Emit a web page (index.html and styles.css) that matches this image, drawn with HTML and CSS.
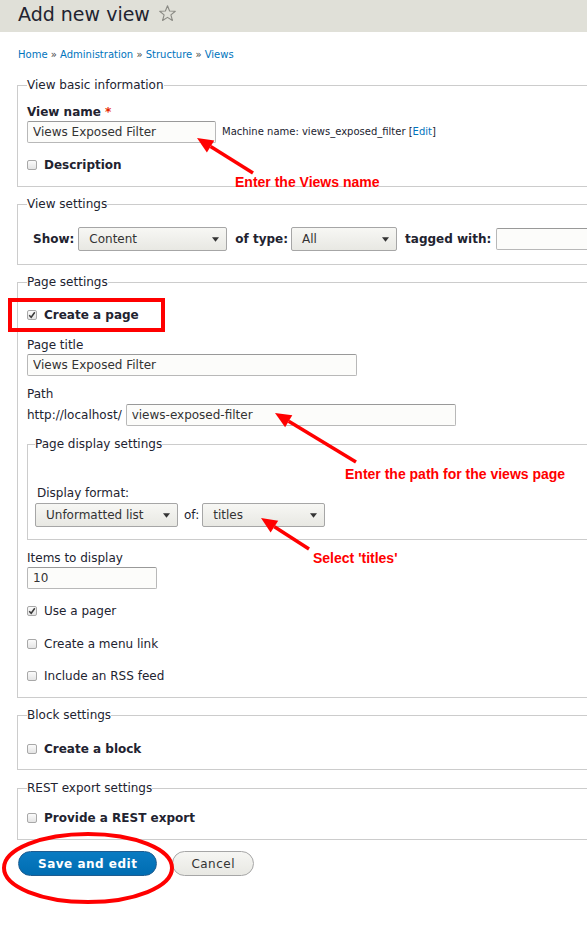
FILE: index.html
```html
<!DOCTYPE html>
<html>
<head>
<meta charset="utf-8">
<title>Add new view</title>
<link rel="stylesheet" href="styles.css">
</head>
<body>
<header class="page-header">
  <h1>Add new view</h1>
  <svg class="star" width="18" height="17" viewBox="0 0 18 17"><polygon points="8.5,0.8 10.6,6 16.3,6.3 11.9,9.9 13.4,15.5 8.5,12.4 3.6,15.5 5.1,9.9 0.7,6.3 6.4,6" fill="none" stroke="#8a8a84" stroke-width="1.1" stroke-linejoin="round"/></svg>
</header>
<main class="page">
  <nav class="breadcrumb"><a href="#">Home</a> » <a href="#">Administration</a> » <a href="#">Structure</a> » <a href="#">Views</a></nav>

  <fieldset class="fs fs-basic">
    <legend>View basic information</legend>
    <div class="lbl bold m11">View name <span class="req">*</span></div>
    <div class="row m1">
      <input class="text w-name" type="text" value="Views Exposed Filter">
      <span class="machine">Machine name: views_exposed_filter [<a href="#">Edit</a>]</span>
    </div>
    <div class="check bold m14"><span class="cb"></span>Description</div>
  </fieldset>

  <fieldset class="fs fs-view">
    <legend>View settings</legend>
    <div class="row show-row m15">
      <span class="bold">Show:</span>
      <span class="select sel-show">Content<svg width="7" height="5" viewBox="0 0 8 5"><path d="M0 0H8L4 5Z" fill="#333"/></svg></span>
      <span class="bold lbl-type">of type:</span>
      <span class="select sel-type">All<svg width="7" height="5" viewBox="0 0 8 5"><path d="M0 0H8L4 5Z" fill="#333"/></svg></span>
      <span class="bold lbl-tag">tagged with:</span>
      <input class="text w-tag" type="text" value="">
    </div>
  </fieldset>

  <fieldset class="fs fs-page">
    <legend>Page settings</legend>
    <div class="check bold m17"><span class="cb checked"><svg width="8" height="8" viewBox="0 0 8 8"><path d="M1.2 4.2L3.2 6.3L6.8 1.2" fill="none" stroke="#3a3a3a" stroke-width="1.5"/></svg></span>Create a page</div>
    <div class="lbl m14">Page title</div>
    <input class="text w-title m1 block" type="text" value="Views Exposed Filter">
    <div class="lbl m10">Path</div>
    <div class="row m2">
      <span class="prefix">http://localhost/</span>
      <input class="text w-title" type="text" value="views-exposed-filter">
    </div>
    <fieldset class="fs fs-inner">
      <legend>Page display settings</legend>
      <div class="lbl lbl-format m33">Display format:</div>
      <div class="row m2">
        <span class="select sel-format">Unformatted list<svg width="7" height="5" viewBox="0 0 8 5"><path d="M0 0H8L4 5Z" fill="#333"/></svg></span>
        <span class="of">of:</span>
        <span class="select sel-of">titles<svg width="7" height="5" viewBox="0 0 8 5"><path d="M0 0H8L4 5Z" fill="#333"/></svg></span>
      </div>
    </fieldset>
    <div class="lbl m10">Items to display</div>
    <input class="text w-items m1 block" type="text" value="10">
    <div class="check m14"><span class="cb checked"><svg width="8" height="8" viewBox="0 0 8 8"><path d="M1.2 4.2L3.2 6.3L6.8 1.2" fill="none" stroke="#3a3a3a" stroke-width="1.5"/></svg></span>Use a pager</div>
    <div class="check m17"><span class="cb"></span>Create a menu link</div>
    <div class="check m16"><span class="cb"></span>Include an RSS feed</div>
  </fieldset>

  <fieldset class="fs fs-block">
    <legend>Block settings</legend>
    <div class="check bold m18"><span class="cb"></span>Create a block</div>
  </fieldset>

  <fieldset class="fs fs-rest">
    <legend>REST export settings</legend>
    <div class="check bold m14"><span class="cb"></span>Provide a REST export</div>
  </fieldset>

  <div class="actions">
    <button class="btn primary" type="button">Save and edit</button>
    <button class="btn" type="button">Cancel</button>
  </div>
</main>

<svg class="annotations" width="587" height="937" viewBox="0 0 587 937">
  <rect x="10" y="300" width="153" height="30" fill="none" stroke="#f00" stroke-width="4"/>
  <ellipse cx="88" cy="868" rx="84" ry="34" fill="none" stroke="#f00" stroke-width="4"/>
  <line x1="253" y1="173" x2="210.6" y2="146.5" stroke="#f00" stroke-width="3.5"/>
  <polygon points="197,138 214.3,140.6 206.9,152.4" fill="#f00"/>
  <line x1="356" y1="462" x2="288.7" y2="421.3" stroke="#f00" stroke-width="3.5"/>
  <polygon points="275,413 292.3,415.3 285.1,427.3" fill="#f00"/>
  <line x1="309" y1="549" x2="274.4" y2="526.7" stroke="#f00" stroke-width="3.5"/>
  <polygon points="261,518 278.2,520.8 270.6,532.6" fill="#f00"/>
  <text class="note" x="235" y="187">Enter the Views name</text>
  <text class="note" x="345" y="479">Enter the path for the views page</text>
  <text class="note" x="313" y="563">Select 'titles'</text>
</svg>
</body>
</html>
```

FILE: styles.css
```css
* { box-sizing: border-box; }
html, body { margin: 0; padding: 0; }
body {
  position: relative;
  width: 587px;
  height: 937px;
  overflow: hidden;
  background: #fff;
  font-family: "DejaVu Sans", Verdana, sans-serif;
  font-size: 12px;
  line-height: 16px;
  color: #222330;
}
a { color: #0074bd; text-decoration: none; }

.page-header {
  height: 32px;
  background: #e0e0d8;
  padding-left: 18px;
  display: flex;
  align-items: flex-start;
}
.page-header h1 {
  margin: 0;
  font-size: 19px;
  font-weight: normal;
  line-height: 29px;
  color: #222330;
}
.star { margin: 5px 0 0 9px; }

.page { padding-left: 17px; width: 740px; }

.breadcrumb {
  margin-top: 16px;
  padding-left: 1px;
  font-size: 10px;
  line-height: 14px;
  color: #444;
}

.fs {
  margin: 9px 0 0;
  padding: 0 9px;
  border: 1px solid #ccc;
  min-width: 0;
}
.fs-basic { margin-top: 15px; padding-bottom: 13px; }
.fs-view { padding-bottom: 13px; }
.fs-page { padding-bottom: 13px; }
.fs-block { padding-bottom: 12px; }
.fs-rest { margin-top: 10px; padding-bottom: 13px; }
.fs-inner { margin-top: 10px; padding: 0 7px 12px; }
.fs legend {
  padding: 0;
  font-size: 12px;
  line-height: 16px;
  color: #222330;
}

.bold { font-weight: bold; }
.m1 { margin-top: 1px; }
.m2 { margin-top: 2px; }
.m10 { margin-top: 10px; }
.m11 { margin-top: 11px; }
.m13 { margin-top: 13px; }
.m14 { margin-top: 14px; }
.m15 { margin-top: 15px; }
.m16 { margin-top: 16px; }
.m17 { margin-top: 17px; }
.m18 { margin-top: 18px; }
.m33 { margin-top: 33px; }
.block { display: block; }

.lbl { line-height: 16px; height: 16px; }
.lbl-format { padding-left: 2px; }
.req { color: #e62600; font-weight: bold; font-size: 12px; }

.row { display: flex; align-items: center; white-space: nowrap; }

.text {
  height: 22px;
  padding: 0 5px;
  border: 1px solid #b8b8b8;
  border-top-color: #999;
  border-radius: 2px;
  background: #fcfcfa;
  font-family: "DejaVu Sans", Verdana, sans-serif;
  font-size: 12px;
  color: #333;
  outline: none;
}
.w-name { width: 189px; }
.w-title { width: 330px; }
.w-items { width: 130px; }
.w-tag { width: 140px; margin-left: 5px; }

.machine { font-size: 10px; margin-left: 6px; color: #222330; }

.prefix { margin-right: 4px; }

.select {
  height: 24px;
  display: inline-flex;
  align-items: center;
  justify-content: space-between;
  padding: 0 7px 0 10px;
  border: 1px solid #a6a6a6;
  border-radius: 2px;
  background: linear-gradient(#f7f7f4, #e8e8e3);
  color: #333;
  font-size: 12px;
}
.show-row { padding-left: 6px; }
.sel-show { width: 149px; margin-left: 4px; }
.lbl-type { margin-left: 8px; }
.sel-type { width: 106px; margin-left: 3px; }
.lbl-tag { margin-left: 8px; }
.sel-format { width: 143px; }
.of { margin-left: 6px; }
.sel-of { width: 123px; margin-left: 3px; }

.check {
  display: flex;
  align-items: center;
  line-height: 16px;
  height: 16px;
}
.cb {
  width: 10px;
  height: 10px;
  margin-right: 7px;
  border: 1px solid #a8a8a8;
  border-radius: 2px;
  background: linear-gradient(#fbfbfb, #e4e4e4);
  display: inline-flex;
  align-items: center;
  justify-content: center;
  flex: none;
}
.cb svg { display: block; }

.actions { margin-top: 11px; display: flex; align-items: center; }
.btn {
  height: 25px;
  padding: 0 18px;
  border: 1px solid #a6a6a6;
  border-radius: 20px;
  background: linear-gradient(#f6f6f3, #e8e8e3);
  color: #333;
  font-family: "DejaVu Sans", Verdana, sans-serif;
  font-size: 12px;
  letter-spacing: 0.5px;
  margin: 0 0 0 15px;
}
.btn.primary {
  margin-left: 1px;
  padding: 0 19px;
  border-color: #1e5c90;
  background: linear-gradient(#0a7bc2, #006db2);
  color: #fff;
  font-weight: bold;
}

.annotations {
  position: absolute;
  top: 0;
  left: 0;
  pointer-events: none;
}
.note {
  font-family: "Liberation Sans", Arial, sans-serif;
  font-weight: bold;
  font-size: 14px;
  fill: #f00;
}
```
